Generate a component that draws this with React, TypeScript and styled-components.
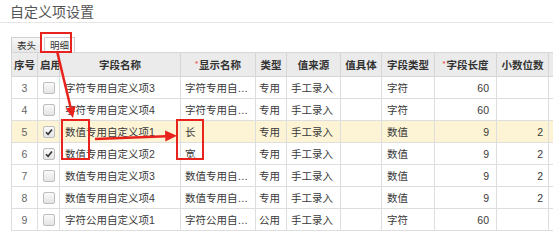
import React from 'react';
import styled, { createGlobalStyle } from 'styled-components';

const GlobalStyle = createGlobalStyle`
  html, body {
    margin: 0;
    padding: 0;
    background: #ffffff;
  }
  body {
    font-family: "Liberation Sans", "Noto Sans CJK SC", sans-serif;
  }
`;

const Page = styled.div`
  position: relative;
  width: 553px;
  height: 233px;
  overflow: hidden;
  background: #ffffff;
`;

const TitleBar = styled.div`
  height: 22px;
  padding-left: 10px;
  border-bottom: 1px solid #e6e6e6;
  display: flex;
  align-items: center;
  font-size: 14px;
  color: #555555;
  font-family: "Noto Sans CJK SC", sans-serif;
`;

const Content = styled.div`
  padding: 15px 0 0 11px;
`;

const TabStrip = styled.div`
  display: flex;
  align-items: flex-end;
  gap: 2px;
  height: 14px;
`;

const Tab = styled.div<{ active?: boolean }>`
  height: 14px;
  padding: 0 5px;
  display: flex;
  align-items: center;
  font-size: 9.5px;
  color: #333333;
  font-family: "Noto Sans CJK SC", sans-serif;
  background: ${(p) => (p.active ? '#ffffff' : 'linear-gradient(#f7f7f7, #e6e6e6)')};
  border: 1px solid #cfcfcf;
  border-bottom: none;
`;

const Table = styled.table`
  border-collapse: collapse;
  table-layout: fixed;
  width: 620px;
  font-size: 10.5px;
  color: #3a3a3a;
  font-family: "Liberation Sans", "Noto Sans CJK SC", sans-serif;
`;

const HeadCell = styled.th`
  height: 23px;
  padding: 0 2px;
  background: #ebebeb;
  border: 1px solid #d6d6d6;
  font-weight: bold;
  text-align: center;
  white-space: nowrap;
  overflow: hidden;
  color: #333333;
`;

const Required = styled.span`
  color: #f06060;
  font-size: 8px;
  vertical-align: 3px;
  margin-right: 1px;
`;

const Row = styled.tr<{ tone?: 'hover' | 'plain' }>`
  height: 22px;
  background: ${(p) => (p.tone === 'hover' ? '#fcf4d4' : '#ffffff')};
`;

const Cell = styled.td<{ align?: 'left' | 'center' | 'right'; pad?: number; muted?: boolean }>`
  padding: 0 ${(p) => (p.align === 'right' ? p.pad ?? 6 : 0)}px 0
    ${(p) => (p.align === 'left' ? p.pad ?? 5 : 0)}px;
  border: 1px solid #dedede;
  text-align: ${(p) => p.align ?? 'left'};
  color: ${(p) => (p.muted ? '#666666' : 'inherit')};
  white-space: nowrap;
  overflow: hidden;
`;

const Check = styled.span`
  display: inline-flex;
  align-items: center;
  justify-content: center;
  width: 10px;
  height: 10px;
  border: 1px solid #bdbdbd;
  border-radius: 2px;
  background: linear-gradient(#fafafa, #e4e4e4);
  vertical-align: middle;
`;

const Overlay = styled.svg`
  position: absolute;
  left: 0;
  top: 0;
  pointer-events: none;
`;

const widths = [26, 22, 121, 75, 31, 54, 41, 53, 62, 52, 83];

type Item = {
  no: number;
  on: boolean;
  field: string;
  display: string;
  kind: string;
  fieldType: string;
  length: string;
  scale: string;
  tone?: 'hover' | 'plain';
};

const rows: Item[] = [
  { no: 3, on: false, field: '字符专用自定义项3', display: '字符专用自…', kind: '专用', fieldType: '字符', length: '60', scale: '' },
  { no: 4, on: false, field: '字符专用自定义项4', display: '字符专用自…', kind: '专用', fieldType: '字符', length: '60', scale: '' },
  { no: 5, on: true, field: '数值专用自定义项1', display: '长', kind: '专用', fieldType: '数值', length: '9', scale: '2', tone: 'hover' },
  { no: 6, on: true, field: '数值专用自定义项2', display: '宽', kind: '专用', fieldType: '数值', length: '9', scale: '2' },
  { no: 7, on: false, field: '数值专用自定义项3', display: '数值专用自…', kind: '专用', fieldType: '数值', length: '9', scale: '2' },
  { no: 8, on: false, field: '数值专用自定义项4', display: '数值专用自…', kind: '专用', fieldType: '数值', length: '9', scale: '2' },
  { no: 9, on: false, field: '字符公用自定义项1', display: '字符公用自…', kind: '公用', fieldType: '字符', length: '60', scale: '' },
];

const RED = '#e8221d';

export default function App() {
  return (
    <>
      <GlobalStyle />
      <Page>
        <TitleBar>自定义项设置</TitleBar>
        <Content>
          <TabStrip>
            <Tab>表头</Tab>
            <Tab active>明细</Tab>
          </TabStrip>
          <Table>
            <colgroup>
              {widths.map((w, i) => (
                <col key={i} style={{ width: w }} />
              ))}
            </colgroup>
            <thead>
              <tr>
                <HeadCell>序号</HeadCell>
                <HeadCell>启用</HeadCell>
                <HeadCell>字段名称</HeadCell>
                <HeadCell>
                  <Required>*</Required>显示名称
                </HeadCell>
                <HeadCell>类型</HeadCell>
                <HeadCell>值来源</HeadCell>
                <HeadCell>值具体</HeadCell>
                <HeadCell>字段类型</HeadCell>
                <HeadCell>
                  <Required>*</Required>字段长度
                </HeadCell>
                <HeadCell>小数位数</HeadCell>
                <HeadCell>必输项</HeadCell>
              </tr>
            </thead>
            <tbody>
              {rows.map((r) => (
                <Row key={r.no} tone={r.tone}>
                  <Cell align="center" muted>{r.no}</Cell>
                  <Cell align="center">
                    <Check>
                      {r.on && (
                        <svg width="8" height="8" viewBox="0 0 8 8">
                          <path d="M1 4.2 L3.1 6.3 L7 1.5" fill="none" stroke="#333" strokeWidth="1.6" />
                        </svg>
                      )}
                    </Check>
                  </Cell>
                  <Cell align="left" pad={5}>{r.field}</Cell>
                  <Cell align="left" pad={4}>{r.display}</Cell>
                  <Cell align="left" pad={3}>{r.kind}</Cell>
                  <Cell align="left" pad={4}>手工录入</Cell>
                  <Cell align="left" />
                  <Cell align="left" pad={5}>{r.fieldType}</Cell>
                  <Cell align="right" pad={7}>{r.length}</Cell>
                  <Cell align="right" pad={5}>{r.scale}</Cell>
                  <Cell align="center" />
                </Row>
              ))}
            </tbody>
          </Table>
        </Content>
        <Overlay width="553" height="233" viewBox="0 0 553 233">
          <rect x="41" y="33" width="30" height="19" fill="none" stroke={RED} strokeWidth="2" />
          <rect x="62" y="120" width="27" height="39" fill="none" stroke={RED} strokeWidth="2" />
          <rect x="177" y="120" width="26" height="39" fill="none" stroke={RED} strokeWidth="2" />
          <line x1="57" y1="51" x2="70.6" y2="107.5" stroke={RED} strokeWidth="2.5" />
          <polygon points="73,118 75.6,106 65.6,108.4" fill={RED} />
          <line x1="95" y1="139" x2="166" y2="136.2" stroke={RED} strokeWidth="2.5" />
          <polygon points="177,135.7 165,130.5 165.4,141.5" fill={RED} />
        </Overlay>
      </Page>
    </>
  );
}
